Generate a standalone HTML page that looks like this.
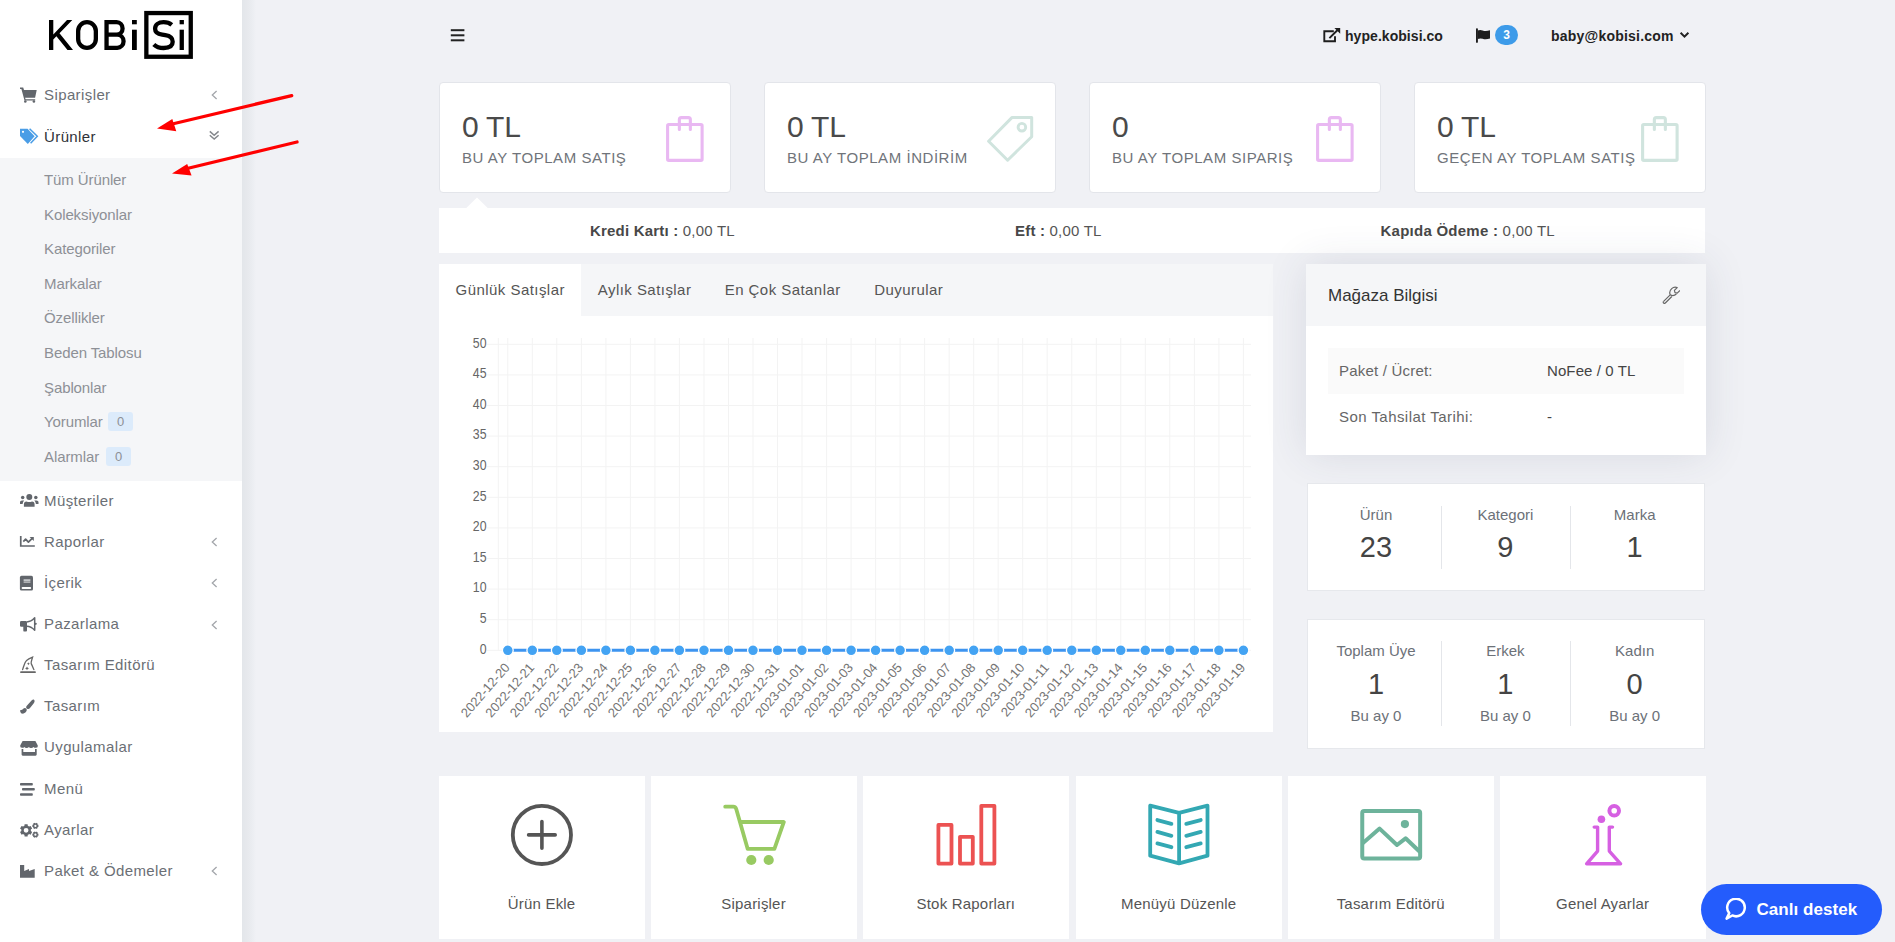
<!DOCTYPE html><html><head><meta charset="utf-8"><style>
*{margin:0;padding:0;box-sizing:border-box}
html,body{width:1895px;height:942px;overflow:hidden}
body{background:#f0f1f5;font-family:"Liberation Sans",sans-serif;color:#555;position:relative}
.a{position:absolute;white-space:nowrap}
#side{position:absolute;left:0;top:0;width:242px;height:942px;background:#fff}
#sideshadow{position:absolute;left:242px;top:0;width:14px;height:942px;background:linear-gradient(to right,#e3e6ea 0,#e7e9ed 6px,#eceef2 11px,#f0f1f5 14px)}
#sub{position:absolute;left:0;top:158px;width:242px;height:323px;background:#f5f6f8}
.mi{position:absolute;left:44px;font-size:15px;letter-spacing:0.4px;color:#6b6f75;white-space:nowrap;line-height:20px;height:20px}
.si{position:absolute;left:44px;font-size:15px;letter-spacing:-0.1px;color:#8d9096;white-space:nowrap;line-height:20px;height:20px}
.ic{position:absolute;left:14px;width:30px;height:24px}
.badge0{position:absolute;background:#dcebfb;color:#8d9096;border-radius:3px;font-size:13px;text-align:center;line-height:19px;height:19px;width:25px}
</style></head><body>
<div id="side"></div><div id="sideshadow"></div><div id="sub"></div>
<svg class="a" style="left:0;top:0" width="242" height="70" viewBox="0 0 242 70">
    <g fill="#000">
      <polygon points="49,20 53.3,20 53.3,34.5 67,20 72.3,20 59.5,33.3 73,50 67.5,50 56.4,36.2 53.3,39.4 53.3,50 49,50"/>
      <rect x="132" y="20" width="4.8" height="4.3"/>
      <rect x="132" y="29.7" width="4.8" height="20.3"/>
      <rect x="179.6" y="20" width="4.3" height="4.3"/>
      <rect x="179.6" y="29.7" width="4.3" height="20.3"/>
    </g>
    <g fill="none" stroke="#000" stroke-width="4.3">
      <rect x="78.15" y="22.15" width="17.7" height="25.7" rx="8.85" ry="8.85"/>
      <path d="M106.55,20 V50 M104.4,22.15 H116.55 a6.28,6.28 0 0 1 0,12.55 H106 M104.4,34.7 H117.25 a6.58,6.58 0 0 1 0,13.15 H104.4"/>
      <rect x="146.35" y="13.05" width="44.4" height="43.7"/>
      <path d="M171.8,24.8 C169.5,22.9 166.8,22.1 163.6,22.1 C158.6,22.1 155.1,24.6 155.1,28.7 C155.1,32.5 157.8,34 162.2,34.7 L165.3,35.2 C170.3,36 172.7,37.8 172.7,41.8 C172.7,45.8 169.3,48 163.7,48 C159.6,48 156.3,46.9 153.8,44.4"/>
    </g>
  </svg>
<div class="mi" style="top:84.8px;color:#6b6f75;font-weight:normal">Siparişler</div>
<svg class="a" style="left:208px;top:89px" width="12" height="12" viewBox="0 0 12 12"><path d="M8.6,2 L4.3,6 L8.6,10" fill="none" stroke="#a3a6ab" stroke-width="1.3"/></svg>
<div class="mi" style="top:127.0px;color:#2f3237;font-weight:normal">Ürünler</div>
<svg class="a" style="left:207px;top:128px" width="14" height="14" viewBox="0 0 14 14"><path d="M2.8,3.4 L7.2,7.3 L11.6,3.4 M2.8,7.2 L7.2,11.1 L11.6,7.2" fill="none" stroke="#85888d" stroke-width="1.5"/></svg>
<div class="si" style="top:170.0px">Tüm Ürünler</div>
<div class="si" style="top:204.6px">Koleksiyonlar</div>
<div class="si" style="top:239.2px">Kategoriler</div>
<div class="si" style="top:273.8px">Markalar</div>
<div class="si" style="top:308.4px">Özellikler</div>
<div class="si" style="top:343.0px">Beden Tablosu</div>
<div class="si" style="top:377.6px">Şablonlar</div>
<div class="si" style="top:412.2px">Yorumlar</div>
<div class="si" style="top:446.8px">Alarmlar</div>
<div class="badge0" style="left:108px;top:412px">0</div>
<div class="badge0" style="left:106px;top:447px">0</div>
<div class="mi" style="top:490.8px;color:#6b6f75;font-weight:normal">Müşteriler</div>
<div class="mi" style="top:531.9px;color:#6b6f75;font-weight:normal">Raporlar</div>
<svg class="a" style="left:208px;top:536.3000000000001px" width="12" height="12" viewBox="0 0 12 12"><path d="M8.6,2 L4.3,6 L8.6,10" fill="none" stroke="#a3a6ab" stroke-width="1.3"/></svg>
<div class="mi" style="top:573.0px;color:#6b6f75;font-weight:normal">İçerik</div>
<svg class="a" style="left:208px;top:577.4000000000001px" width="12" height="12" viewBox="0 0 12 12"><path d="M8.6,2 L4.3,6 L8.6,10" fill="none" stroke="#a3a6ab" stroke-width="1.3"/></svg>
<div class="mi" style="top:614.1px;color:#6b6f75;font-weight:normal">Pazarlama</div>
<svg class="a" style="left:208px;top:618.5px" width="12" height="12" viewBox="0 0 12 12"><path d="M8.6,2 L4.3,6 L8.6,10" fill="none" stroke="#a3a6ab" stroke-width="1.3"/></svg>
<div class="mi" style="top:655.2px;color:#6b6f75;font-weight:normal">Tasarım Editörü</div>
<div class="mi" style="top:696.3px;color:#6b6f75;font-weight:normal">Tasarım</div>
<div class="mi" style="top:737.4px;color:#6b6f75;font-weight:normal">Uygulamalar</div>
<div class="mi" style="top:778.5px;color:#6b6f75;font-weight:normal">Menü</div>
<div class="mi" style="top:819.6px;color:#6b6f75;font-weight:normal">Ayarlar</div>
<div class="mi" style="top:860.7px;color:#6b6f75;font-weight:normal">Paket &amp; Ödemeler</div>
<svg class="a" style="left:208px;top:865.1000000000001px" width="12" height="12" viewBox="0 0 12 12"><path d="M8.6,2 L4.3,6 L8.6,10" fill="none" stroke="#a3a6ab" stroke-width="1.3"/></svg>
<svg class="ic" style="top:80px" viewBox="14 80 30 24"><g fill="#62666c"><path d="M20,87.6 h3.2 l0.8,2.3 h12.7 l-1.6,7.9 h-10 l0.5,1.4 h9.6 v1.3 h-10.7 l-3.1,-11.4 h-1.4 z"/><circle cx="25.3" cy="101.5" r="1.3"/><circle cx="33.9" cy="101.5" r="1.3"/></g></svg>
<svg class="ic" style="top:120px" viewBox="14 120 30 24"><g fill="#4a9de6"><path d="M20,128.7 H27.6 L34.6,136.2 L27.8,143.9 L20,136 Z"/></g><circle cx="23" cy="131.8" r="1.1" fill="#fff"/><path d="M29.6,128.7 L37.3,136.2 L30.6,143.3" fill="none" stroke="#4a9de6" stroke-width="1.5"/></svg>
<svg class="ic" style="top:488px" viewBox="14 488 30 24"><g fill="#62666c"><circle cx="29.3" cy="496.9" r="3"/><circle cx="22.7" cy="497.4" r="1.75"/><circle cx="35.8" cy="497.4" r="1.75"/><path d="M23.9,506.8 V504.6 Q23.9,501.5 26.5,501.5 Q29.25,502.6 32,501.5 Q34.6,501.5 34.6,504.6 V506.8 Z"/><path d="M20,503.9 V502 Q20,500.4 22,500.4 H24.2 Q22.8,501.8 22.6,503.9 Z"/><path d="M38.5,503.9 V502 Q38.5,500.4 36.5,500.4 H34.3 Q35.7,501.8 35.9,503.9 Z"/></g></svg>
<svg class="ic" style="top:530px" viewBox="14 530 30 24"><g fill="#62666c"><path d="M19.9,536 H21.6 V545.3 H34.8 V546.8 H19.9 Z"/><polygon points="29.6,537 33.8,537 33.8,541"/></g><polyline points="23.3,541.6 25.6,539.2 28.4,542.2 32.2,538.3" fill="none" stroke="#62666c" stroke-width="1.7" stroke-linejoin="round"/></svg>
<svg class="ic" style="top:571px" viewBox="14 571 30 24"><rect x="19.9" y="575.8" width="13.1" height="14.8" rx="1.6" fill="#62666c"/><rect x="21.7" y="587" width="9.4" height="2" rx="0.8" fill="#fff"/><rect x="23.6" y="579.3" width="6.8" height="1.6" fill="#d0d2d5"/><rect x="23.6" y="581.3" width="6.8" height="1.6" fill="#b8babd"/></svg>
<svg class="ic" style="top:612px" viewBox="14 612 30 24"><g fill="#62666c"><rect x="20" y="621" width="7" height="5.8" rx="1.2"/><path d="M23.3,626 H27 V630.6 Q27,631.6 26,631.6 H24.6 Q23.3,631.6 23.3,630.4 Z"/><circle cx="35.7" cy="623.8" r="1.1"/></g><path d="M26.8,621.9 Q31,621.9 34.7,617.8 V630.2 Q31,626.2 26.8,626.2" fill="none" stroke="#62666c" stroke-width="1.5" stroke-linejoin="round"/></svg>
<svg class="ic" style="top:653px" viewBox="14 653 30 24"><path d="M22.6,669.6 C24,665.5 24.8,661.8 26.6,660.4 C28.6,658.8 30.7,658 32.6,657.2 C31.9,659.8 30.6,662.4 31.2,663.6 C32.4,666 33.2,668 33.9,669.6" fill="none" stroke="#666" stroke-width="1.3" stroke-linecap="round"/><rect x="20.2" y="671.2" width="15.6" height="1.9" rx="0.6" fill="#666"/><path d="M28.4,662.2 l0.5,1 1,0.5 -1,0.5 -0.5,1 -0.5,-1 -1,-0.5 1,-0.5z M27,666.4 l0.7,1.3 1.3,0.6 -1.3,0.6 -0.7,1.3 -0.7,-1.3 -1.3,-0.6 1.3,-0.6z" fill="#666"/></svg>
<svg class="ic" style="top:694px" viewBox="14 694 30 24"><g fill="#62666c"><path d="M34,699.7 C35.1,700.6 34.6,702 33.6,703.5 L29.8,708.3 C29.1,709.2 27.8,709.4 26.8,708.6 L26.6,708.4 C25.9,707.6 26,706.5 26.8,705.7 L31.8,700.3 C32.6,699.4 33.4,699.2 34,699.7 Z"/><path d="M20,710.2 C21.2,710.5 22.5,709.6 23.5,708.5 C24.3,707.8 25.4,707.8 26.2,708.6 C27,709.4 26.9,710.6 26.2,711.6 C25,713.3 23.2,714 21.8,713.6 C20.8,713.2 20.1,711.6 20,710.2 Z"/></g></svg>
<svg class="ic" style="top:735px" viewBox="14 735 30 24"><g fill="#62666c"><path d="M22.6,741 H35.4 L37.8,745.4 Q38.2,747.6 36,747.8 Q34.2,747.8 33.5,746.9 Q32.5,748 31,747.9 Q29.6,748 28.9,746.9 Q28,748 26.4,747.9 Q25,747.9 24.4,746.9 Q23.5,747.9 22,747.8 Q19.8,747.6 20.2,745.4 Z"/><path d="M21.6,749 H23.3 V752 H35 V749 H36.7 V754.6 Q36.7,755.7 35.6,755.7 H22.7 Q21.6,755.7 21.6,754.6 Z"/></g></svg>
<svg class="ic" style="top:776px" viewBox="14 776 30 24"><g fill="#62666c"><rect x="20" y="783" width="12.8" height="2.5" rx="0.8"/><rect x="22" y="788.1" width="12.8" height="2.5" rx="0.8"/><rect x="20" y="793.2" width="12.8" height="2.5" rx="0.8"/></g></svg>
<svg class="ic" style="top:817px" viewBox="14 817 30 24"><path fill-rule="evenodd" fill="#62666c" d="M24.41,825.81 L24.60,824.18 L27.60,824.18 L27.79,825.81 L28.15,825.96 L28.50,826.14 L28.83,826.35 L29.14,826.59 L30.65,825.94 L32.15,828.54 L30.84,829.52 L30.88,829.91 L30.90,830.30 L30.88,830.69 L30.84,831.08 L32.15,832.06 L30.65,834.66 L29.14,834.01 L28.83,834.25 L28.50,834.46 L28.15,834.64 L27.79,834.79 L27.60,836.42 L24.60,836.42 L24.41,834.79 L24.05,834.64 L23.70,834.46 L23.37,834.25 L23.06,834.01 L21.55,834.66 L20.05,832.06 L21.36,831.08 L21.32,830.69 L21.30,830.30 L21.32,829.91 L21.36,829.52 L20.05,828.54 L21.55,825.94 L23.06,826.59 L23.37,826.35 L23.70,826.14 L24.05,825.96 Z M28.5,830.3 A2.4,2.4 0 1 0 23.7,830.3 A2.4,2.4 0 1 0 28.5,830.3 Z M35.46,823.50 L36.02,822.76 L37.81,823.80 L37.45,824.65 L37.46,824.68 L37.48,824.70 L37.49,824.72 L37.51,824.75 L38.43,824.86 L38.43,826.94 L37.51,827.05 L37.49,827.08 L37.48,827.10 L37.46,827.12 L37.45,827.15 L37.81,828.00 L36.02,829.04 L35.46,828.30 L35.43,828.30 L35.40,828.30 L35.37,828.30 L35.34,828.30 L34.78,829.04 L32.99,828.00 L33.35,827.15 L33.34,827.12 L33.32,827.10 L33.31,827.08 L33.29,827.05 L32.37,826.94 L32.37,824.86 L33.29,824.75 L33.31,824.72 L33.32,824.70 L33.34,824.68 L33.35,824.65 L32.99,823.80 L34.78,822.76 L35.34,823.50 L35.37,823.50 L35.40,823.50 L35.43,823.50 Z M36.5,825.9 A1.1,1.1 0 1 0 34.3,825.9 A1.1,1.1 0 1 0 36.5,825.9 Z M35.46,832.30 L36.02,831.56 L37.81,832.60 L37.45,833.45 L37.46,833.48 L37.48,833.50 L37.49,833.52 L37.51,833.55 L38.43,833.66 L38.43,835.74 L37.51,835.85 L37.49,835.88 L37.48,835.90 L37.46,835.92 L37.45,835.95 L37.81,836.80 L36.02,837.84 L35.46,837.10 L35.43,837.10 L35.40,837.10 L35.37,837.10 L35.34,837.10 L34.78,837.84 L32.99,836.80 L33.35,835.95 L33.34,835.92 L33.32,835.90 L33.31,835.88 L33.29,835.85 L32.37,835.74 L32.37,833.66 L33.29,833.55 L33.31,833.52 L33.32,833.50 L33.34,833.48 L33.35,833.45 L32.99,832.60 L34.78,831.56 L35.34,832.30 L35.37,832.30 L35.40,832.30 L35.43,832.30 Z M36.5,834.7 A1.1,1.1 0 1 0 34.3,834.7 A1.1,1.1 0 1 0 36.5,834.7 Z"/></svg>
<svg class="ic" style="top:859px" viewBox="14 859 30 24"><path fill="#62666c" d="M20,865 H24.2 V871 L29,868.9 V871 L34.7,868.9 V877.7 H20 Z"/></svg>
<svg class="a" style="left:450px;top:28px" width="16" height="15" viewBox="0 0 16 15"><g fill="#222"><rect x="0.8" y="1.2" width="13.6" height="2"/><rect x="0.8" y="6.3" width="13.6" height="2"/><rect x="0.8" y="11.3" width="13.6" height="2"/></g></svg>
<svg class="a" style="left:1322px;top:27px" width="19" height="17" viewBox="0 0 19 17"><path d="M11.8,4.3 H2.3 V14.3 H13 V9.2" fill="none" stroke="#1e1e1e" stroke-width="1.9"/><path d="M7.4,11.2 L15.6,3" stroke="#1e1e1e" stroke-width="1.9"/><polygon points="12.4,1 18.2,1 18.2,6.8" fill="#1e1e1e"/></svg>
<div class="a" style="left:1345px;top:26px;font-size:14px;font-weight:bold;color:#222;line-height:20px;letter-spacing:0.05px">hype.kobisi.co</div>
<svg class="a" style="left:1474px;top:27px" width="18" height="17" viewBox="0 0 18 17"><rect x="2" y="1.3" width="1.9" height="14.6" rx="0.8" fill="#1e1e1e"/><path d="M3.6,3.5 Q6.2,2.4 8.6,3.4 Q11.6,4.6 16,3.3 V11.6 Q11.6,13 8.6,11.8 Q6.2,10.9 3.6,12 Z" fill="#1e1e1e"/></svg>
<div class="a" style="left:1495px;top:25px;width:23px;height:20px;border-radius:10px;background:#3d9be9;color:#fff;font-size:12px;font-weight:bold;text-align:center;line-height:21px">3</div>
<div class="a" style="left:1551px;top:26px;font-size:14px;font-weight:bold;color:#222;line-height:20px;letter-spacing:0.22px">baby@kobisi.com</div>
<svg class="a" style="left:1679px;top:30px" width="11" height="10" viewBox="0 0 11 10"><path d="M1.6,2.8 L5.5,6.6 L9.4,2.8" fill="none" stroke="#222" stroke-width="2"/></svg>
<div class="a" style="left:439px;top:82px;width:292px;height:111px;background:#fff;border:1px solid #e3e5ea;border-radius:4px"></div>
<div class="a" style="left:462px;top:108.7px;font-size:30px;color:#4a4a4a;line-height:36px;letter-spacing:-0.2px">0 TL</div>
<div class="a" style="left:462px;top:147.8px;font-size:15px;color:#70747a;line-height:20px;letter-spacing:0.55px">BU AY TOPLAM SATIŞ</div>
<svg class="a" style="left:665px;top:115px" width="40" height="48" viewBox="0 0 40 48"><rect x="2.6" y="9.45" width="34.5" height="35.9" rx="1.2" fill="none" stroke="#e9b8f2" stroke-width="3.1"/><path d="M14.35,14.5 V4.6 Q14.35,2.6 16.3,2.6 H23.4 Q25.35,2.6 25.35,4.6 V14.5" fill="none" stroke="#e9b8f2" stroke-width="3.1" stroke-linecap="round"/></svg>
<div class="a" style="left:764px;top:82px;width:292px;height:111px;background:#fff;border:1px solid #e3e5ea;border-radius:4px"></div>
<div class="a" style="left:787px;top:108.7px;font-size:30px;color:#4a4a4a;line-height:36px;letter-spacing:-0.2px">0 TL</div>
<div class="a" style="left:787px;top:147.8px;font-size:15px;color:#70747a;line-height:20px;letter-spacing:0.55px">BU AY TOPLAM İNDİRİM</div>
<svg class="a" style="left:985.5px;top:115px" width="48" height="48" viewBox="0 0 48 48"><path d="M26.1,2.4 H45.7 V21.7 L21.6,45.2 L2.6,26.2 Z" fill="none" stroke="#d0e4de" stroke-width="3" stroke-linejoin="round"/><circle cx="35.9" cy="12.2" r="3.8" fill="none" stroke="#d0e4de" stroke-width="2.9"/></svg>
<div class="a" style="left:1089px;top:82px;width:292px;height:111px;background:#fff;border:1px solid #e3e5ea;border-radius:4px"></div>
<div class="a" style="left:1112px;top:108.7px;font-size:30px;color:#4a4a4a;line-height:36px;letter-spacing:-0.2px">0</div>
<div class="a" style="left:1112px;top:147.8px;font-size:15px;color:#70747a;line-height:20px;letter-spacing:0.55px">BU AY TOPLAM SIPARIŞ</div>
<svg class="a" style="left:1315px;top:115px" width="40" height="48" viewBox="0 0 40 48"><rect x="2.6" y="9.45" width="34.5" height="35.9" rx="1.2" fill="none" stroke="#e9b8f2" stroke-width="3.1"/><path d="M14.35,14.5 V4.6 Q14.35,2.6 16.3,2.6 H23.4 Q25.35,2.6 25.35,4.6 V14.5" fill="none" stroke="#e9b8f2" stroke-width="3.1" stroke-linecap="round"/></svg>
<div class="a" style="left:1414px;top:82px;width:292px;height:111px;background:#fff;border:1px solid #e3e5ea;border-radius:4px"></div>
<div class="a" style="left:1437px;top:108.7px;font-size:30px;color:#4a4a4a;line-height:36px;letter-spacing:-0.2px">0 TL</div>
<div class="a" style="left:1437px;top:147.8px;font-size:15px;color:#70747a;line-height:20px;letter-spacing:0.55px">GEÇEN AY TOPLAM SATIŞ</div>
<svg class="a" style="left:1640px;top:115px" width="40" height="48" viewBox="0 0 40 48"><rect x="2.6" y="9.45" width="34.5" height="35.9" rx="1.2" fill="none" stroke="#d0e4de" stroke-width="3.1"/><path d="M14.35,14.5 V4.6 Q14.35,2.6 16.3,2.6 H23.4 Q25.35,2.6 25.35,4.6 V14.5" fill="none" stroke="#d0e4de" stroke-width="3.1" stroke-linecap="round"/></svg>
<svg class="a" style="left:465px;top:197px" width="24" height="12" viewBox="0 0 24 12"><polygon points="0.8,11.5 12,0.5 23.2,11.5" fill="#fff"/></svg>
<div class="a" style="left:439px;top:208px;width:1266px;height:45px;background:#fff"></div>
<div class="a" style="left:590px;top:220.5px;font-size:15px;color:#555;line-height:20px;letter-spacing:0.2px"><b style="color:#484848">Kredi Kartı :</b> 0,00 TL</div>
<div class="a" style="left:1015px;top:220.5px;font-size:15px;color:#555;line-height:20px;letter-spacing:0.2px"><b style="color:#484848">Eft :</b> 0,00 TL</div>
<div class="a" style="left:1380.5px;top:220.5px;font-size:15px;color:#555;line-height:20px;letter-spacing:0.25px"><b style="color:#484848">Kapıda Ödeme :</b> 0,00 TL</div>
<div class="a" style="left:439px;top:264px;width:834px;height:468px;background:#fff"></div>
<div class="a" style="left:581px;top:264px;width:692px;height:52px;background:#f5f6f8"></div>
<div class="a" style="left:455.6px;top:279.8px;font-size:15px;color:#555;line-height:20px;letter-spacing:0.45px">Günlük Satışlar</div>
<div class="a" style="left:597.8px;top:279.8px;font-size:15px;color:#555;line-height:20px;letter-spacing:0.45px">Aylık Satışlar</div>
<div class="a" style="left:724.7px;top:279.8px;font-size:15px;color:#555;line-height:20px;letter-spacing:0.45px">En Çok Satanlar</div>
<div class="a" style="left:874.2px;top:279.8px;font-size:15px;color:#555;line-height:20px;letter-spacing:0.45px">Duyurular</div>
<svg class="a" style="left:439px;top:316px" width="834" height="416" viewBox="439 316 834 416"><line x1="487" y1="650.3" x2="1251" y2="650.3" stroke="#f3f3f3" stroke-width="1"/><text transform="translate(486.5,653.6) scale(0.95,1.075)" text-anchor="end" font-size="13" fill="#666" font-family="Liberation Sans">0</text><line x1="487" y1="619.7" x2="1251" y2="619.7" stroke="#f3f3f3" stroke-width="1"/><text transform="translate(486.5,623.0) scale(0.95,1.075)" text-anchor="end" font-size="13" fill="#666" font-family="Liberation Sans">5</text><line x1="487" y1="589.1" x2="1251" y2="589.1" stroke="#f3f3f3" stroke-width="1"/><text transform="translate(486.5,592.4) scale(0.95,1.075)" text-anchor="end" font-size="13" fill="#666" font-family="Liberation Sans">10</text><line x1="487" y1="558.5" x2="1251" y2="558.5" stroke="#f3f3f3" stroke-width="1"/><text transform="translate(486.5,561.8) scale(0.95,1.075)" text-anchor="end" font-size="13" fill="#666" font-family="Liberation Sans">15</text><line x1="487" y1="527.9" x2="1251" y2="527.9" stroke="#f3f3f3" stroke-width="1"/><text transform="translate(486.5,531.2) scale(0.95,1.075)" text-anchor="end" font-size="13" fill="#666" font-family="Liberation Sans">20</text><line x1="487" y1="497.3" x2="1251" y2="497.3" stroke="#f3f3f3" stroke-width="1"/><text transform="translate(486.5,500.6) scale(0.95,1.075)" text-anchor="end" font-size="13" fill="#666" font-family="Liberation Sans">25</text><line x1="487" y1="466.7" x2="1251" y2="466.7" stroke="#f3f3f3" stroke-width="1"/><text transform="translate(486.5,470.0) scale(0.95,1.075)" text-anchor="end" font-size="13" fill="#666" font-family="Liberation Sans">30</text><line x1="487" y1="436.1" x2="1251" y2="436.1" stroke="#f3f3f3" stroke-width="1"/><text transform="translate(486.5,439.4) scale(0.95,1.075)" text-anchor="end" font-size="13" fill="#666" font-family="Liberation Sans">35</text><line x1="487" y1="405.5" x2="1251" y2="405.5" stroke="#f3f3f3" stroke-width="1"/><text transform="translate(486.5,408.8) scale(0.95,1.075)" text-anchor="end" font-size="13" fill="#666" font-family="Liberation Sans">40</text><line x1="487" y1="374.9" x2="1251" y2="374.9" stroke="#f3f3f3" stroke-width="1"/><text transform="translate(486.5,378.2) scale(0.95,1.075)" text-anchor="end" font-size="13" fill="#666" font-family="Liberation Sans">45</text><line x1="487" y1="344.3" x2="1251" y2="344.3" stroke="#f3f3f3" stroke-width="1"/><text transform="translate(486.5,347.6) scale(0.95,1.075)" text-anchor="end" font-size="13" fill="#666" font-family="Liberation Sans">50</text><line x1="498.3" y1="338" x2="498.3" y2="650.3" stroke="#f3f3f3" stroke-width="1"/><line x1="507.8" y1="338" x2="507.8" y2="661.5" stroke="#f3f3f3" stroke-width="1"/><line x1="532.3" y1="338" x2="532.3" y2="661.5" stroke="#f3f3f3" stroke-width="1"/><line x1="556.8" y1="338" x2="556.8" y2="661.5" stroke="#f3f3f3" stroke-width="1"/><line x1="581.4" y1="338" x2="581.4" y2="661.5" stroke="#f3f3f3" stroke-width="1"/><line x1="605.9" y1="338" x2="605.9" y2="661.5" stroke="#f3f3f3" stroke-width="1"/><line x1="630.4" y1="338" x2="630.4" y2="661.5" stroke="#f3f3f3" stroke-width="1"/><line x1="654.9" y1="338" x2="654.9" y2="661.5" stroke="#f3f3f3" stroke-width="1"/><line x1="679.4" y1="338" x2="679.4" y2="661.5" stroke="#f3f3f3" stroke-width="1"/><line x1="704.0" y1="338" x2="704.0" y2="661.5" stroke="#f3f3f3" stroke-width="1"/><line x1="728.5" y1="338" x2="728.5" y2="661.5" stroke="#f3f3f3" stroke-width="1"/><line x1="753.0" y1="338" x2="753.0" y2="661.5" stroke="#f3f3f3" stroke-width="1"/><line x1="777.5" y1="338" x2="777.5" y2="661.5" stroke="#f3f3f3" stroke-width="1"/><line x1="802.0" y1="338" x2="802.0" y2="661.5" stroke="#f3f3f3" stroke-width="1"/><line x1="826.6" y1="338" x2="826.6" y2="661.5" stroke="#f3f3f3" stroke-width="1"/><line x1="851.1" y1="338" x2="851.1" y2="661.5" stroke="#f3f3f3" stroke-width="1"/><line x1="875.6" y1="338" x2="875.6" y2="661.5" stroke="#f3f3f3" stroke-width="1"/><line x1="900.1" y1="338" x2="900.1" y2="661.5" stroke="#f3f3f3" stroke-width="1"/><line x1="924.6" y1="338" x2="924.6" y2="661.5" stroke="#f3f3f3" stroke-width="1"/><line x1="949.2" y1="338" x2="949.2" y2="661.5" stroke="#f3f3f3" stroke-width="1"/><line x1="973.7" y1="338" x2="973.7" y2="661.5" stroke="#f3f3f3" stroke-width="1"/><line x1="998.2" y1="338" x2="998.2" y2="661.5" stroke="#f3f3f3" stroke-width="1"/><line x1="1022.7" y1="338" x2="1022.7" y2="661.5" stroke="#f3f3f3" stroke-width="1"/><line x1="1047.2" y1="338" x2="1047.2" y2="661.5" stroke="#f3f3f3" stroke-width="1"/><line x1="1071.8" y1="338" x2="1071.8" y2="661.5" stroke="#f3f3f3" stroke-width="1"/><line x1="1096.3" y1="338" x2="1096.3" y2="661.5" stroke="#f3f3f3" stroke-width="1"/><line x1="1120.8" y1="338" x2="1120.8" y2="661.5" stroke="#f3f3f3" stroke-width="1"/><line x1="1145.3" y1="338" x2="1145.3" y2="661.5" stroke="#f3f3f3" stroke-width="1"/><line x1="1169.8" y1="338" x2="1169.8" y2="661.5" stroke="#f3f3f3" stroke-width="1"/><line x1="1194.4" y1="338" x2="1194.4" y2="661.5" stroke="#f3f3f3" stroke-width="1"/><line x1="1218.9" y1="338" x2="1218.9" y2="661.5" stroke="#f3f3f3" stroke-width="1"/><line x1="1243.4" y1="338" x2="1243.4" y2="661.5" stroke="#f3f3f3" stroke-width="1"/><text text-anchor="end" font-size="13" fill="#757575" font-family="Liberation Sans" transform="translate(507.0,665) rotate(-49)" dominant-baseline="central">2022-12-20</text><text text-anchor="end" font-size="13" fill="#757575" font-family="Liberation Sans" transform="translate(531.5,665) rotate(-49)" dominant-baseline="central">2022-12-21</text><text text-anchor="end" font-size="13" fill="#757575" font-family="Liberation Sans" transform="translate(556.0,665) rotate(-49)" dominant-baseline="central">2022-12-22</text><text text-anchor="end" font-size="13" fill="#757575" font-family="Liberation Sans" transform="translate(580.6,665) rotate(-49)" dominant-baseline="central">2022-12-23</text><text text-anchor="end" font-size="13" fill="#757575" font-family="Liberation Sans" transform="translate(605.1,665) rotate(-49)" dominant-baseline="central">2022-12-24</text><text text-anchor="end" font-size="13" fill="#757575" font-family="Liberation Sans" transform="translate(629.6,665) rotate(-49)" dominant-baseline="central">2022-12-25</text><text text-anchor="end" font-size="13" fill="#757575" font-family="Liberation Sans" transform="translate(654.1,665) rotate(-49)" dominant-baseline="central">2022-12-26</text><text text-anchor="end" font-size="13" fill="#757575" font-family="Liberation Sans" transform="translate(678.6,665) rotate(-49)" dominant-baseline="central">2022-12-27</text><text text-anchor="end" font-size="13" fill="#757575" font-family="Liberation Sans" transform="translate(703.2,665) rotate(-49)" dominant-baseline="central">2022-12-28</text><text text-anchor="end" font-size="13" fill="#757575" font-family="Liberation Sans" transform="translate(727.7,665) rotate(-49)" dominant-baseline="central">2022-12-29</text><text text-anchor="end" font-size="13" fill="#757575" font-family="Liberation Sans" transform="translate(752.2,665) rotate(-49)" dominant-baseline="central">2022-12-30</text><text text-anchor="end" font-size="13" fill="#757575" font-family="Liberation Sans" transform="translate(776.7,665) rotate(-49)" dominant-baseline="central">2022-12-31</text><text text-anchor="end" font-size="13" fill="#757575" font-family="Liberation Sans" transform="translate(801.2,665) rotate(-49)" dominant-baseline="central">2023-01-01</text><text text-anchor="end" font-size="13" fill="#757575" font-family="Liberation Sans" transform="translate(825.8,665) rotate(-49)" dominant-baseline="central">2023-01-02</text><text text-anchor="end" font-size="13" fill="#757575" font-family="Liberation Sans" transform="translate(850.3,665) rotate(-49)" dominant-baseline="central">2023-01-03</text><text text-anchor="end" font-size="13" fill="#757575" font-family="Liberation Sans" transform="translate(874.8,665) rotate(-49)" dominant-baseline="central">2023-01-04</text><text text-anchor="end" font-size="13" fill="#757575" font-family="Liberation Sans" transform="translate(899.3,665) rotate(-49)" dominant-baseline="central">2023-01-05</text><text text-anchor="end" font-size="13" fill="#757575" font-family="Liberation Sans" transform="translate(923.8,665) rotate(-49)" dominant-baseline="central">2023-01-06</text><text text-anchor="end" font-size="13" fill="#757575" font-family="Liberation Sans" transform="translate(948.4,665) rotate(-49)" dominant-baseline="central">2023-01-07</text><text text-anchor="end" font-size="13" fill="#757575" font-family="Liberation Sans" transform="translate(972.9,665) rotate(-49)" dominant-baseline="central">2023-01-08</text><text text-anchor="end" font-size="13" fill="#757575" font-family="Liberation Sans" transform="translate(997.4,665) rotate(-49)" dominant-baseline="central">2023-01-09</text><text text-anchor="end" font-size="13" fill="#757575" font-family="Liberation Sans" transform="translate(1021.9,665) rotate(-49)" dominant-baseline="central">2023-01-10</text><text text-anchor="end" font-size="13" fill="#757575" font-family="Liberation Sans" transform="translate(1046.4,665) rotate(-49)" dominant-baseline="central">2023-01-11</text><text text-anchor="end" font-size="13" fill="#757575" font-family="Liberation Sans" transform="translate(1071.0,665) rotate(-49)" dominant-baseline="central">2023-01-12</text><text text-anchor="end" font-size="13" fill="#757575" font-family="Liberation Sans" transform="translate(1095.5,665) rotate(-49)" dominant-baseline="central">2023-01-13</text><text text-anchor="end" font-size="13" fill="#757575" font-family="Liberation Sans" transform="translate(1120.0,665) rotate(-49)" dominant-baseline="central">2023-01-14</text><text text-anchor="end" font-size="13" fill="#757575" font-family="Liberation Sans" transform="translate(1144.5,665) rotate(-49)" dominant-baseline="central">2023-01-15</text><text text-anchor="end" font-size="13" fill="#757575" font-family="Liberation Sans" transform="translate(1169.0,665) rotate(-49)" dominant-baseline="central">2023-01-16</text><text text-anchor="end" font-size="13" fill="#757575" font-family="Liberation Sans" transform="translate(1193.6,665) rotate(-49)" dominant-baseline="central">2023-01-17</text><text text-anchor="end" font-size="13" fill="#757575" font-family="Liberation Sans" transform="translate(1218.1,665) rotate(-49)" dominant-baseline="central">2023-01-18</text><text text-anchor="end" font-size="13" fill="#757575" font-family="Liberation Sans" transform="translate(1242.6,665) rotate(-49)" dominant-baseline="central">2023-01-19</text><line x1="507.8" y1="650.3" x2="1243.4" y2="650.3" stroke="#3d94f0" stroke-width="2.9"/><circle cx="507.8" cy="650.3" r="5.4" fill="#43a3f3" stroke="#fff" stroke-width="1.3"/><circle cx="532.3" cy="650.3" r="5.4" fill="#43a3f3" stroke="#fff" stroke-width="1.3"/><circle cx="556.8" cy="650.3" r="5.4" fill="#43a3f3" stroke="#fff" stroke-width="1.3"/><circle cx="581.4" cy="650.3" r="5.4" fill="#43a3f3" stroke="#fff" stroke-width="1.3"/><circle cx="605.9" cy="650.3" r="5.4" fill="#43a3f3" stroke="#fff" stroke-width="1.3"/><circle cx="630.4" cy="650.3" r="5.4" fill="#43a3f3" stroke="#fff" stroke-width="1.3"/><circle cx="654.9" cy="650.3" r="5.4" fill="#43a3f3" stroke="#fff" stroke-width="1.3"/><circle cx="679.4" cy="650.3" r="5.4" fill="#43a3f3" stroke="#fff" stroke-width="1.3"/><circle cx="704.0" cy="650.3" r="5.4" fill="#43a3f3" stroke="#fff" stroke-width="1.3"/><circle cx="728.5" cy="650.3" r="5.4" fill="#43a3f3" stroke="#fff" stroke-width="1.3"/><circle cx="753.0" cy="650.3" r="5.4" fill="#43a3f3" stroke="#fff" stroke-width="1.3"/><circle cx="777.5" cy="650.3" r="5.4" fill="#43a3f3" stroke="#fff" stroke-width="1.3"/><circle cx="802.0" cy="650.3" r="5.4" fill="#43a3f3" stroke="#fff" stroke-width="1.3"/><circle cx="826.6" cy="650.3" r="5.4" fill="#43a3f3" stroke="#fff" stroke-width="1.3"/><circle cx="851.1" cy="650.3" r="5.4" fill="#43a3f3" stroke="#fff" stroke-width="1.3"/><circle cx="875.6" cy="650.3" r="5.4" fill="#43a3f3" stroke="#fff" stroke-width="1.3"/><circle cx="900.1" cy="650.3" r="5.4" fill="#43a3f3" stroke="#fff" stroke-width="1.3"/><circle cx="924.6" cy="650.3" r="5.4" fill="#43a3f3" stroke="#fff" stroke-width="1.3"/><circle cx="949.2" cy="650.3" r="5.4" fill="#43a3f3" stroke="#fff" stroke-width="1.3"/><circle cx="973.7" cy="650.3" r="5.4" fill="#43a3f3" stroke="#fff" stroke-width="1.3"/><circle cx="998.2" cy="650.3" r="5.4" fill="#43a3f3" stroke="#fff" stroke-width="1.3"/><circle cx="1022.7" cy="650.3" r="5.4" fill="#43a3f3" stroke="#fff" stroke-width="1.3"/><circle cx="1047.2" cy="650.3" r="5.4" fill="#43a3f3" stroke="#fff" stroke-width="1.3"/><circle cx="1071.8" cy="650.3" r="5.4" fill="#43a3f3" stroke="#fff" stroke-width="1.3"/><circle cx="1096.3" cy="650.3" r="5.4" fill="#43a3f3" stroke="#fff" stroke-width="1.3"/><circle cx="1120.8" cy="650.3" r="5.4" fill="#43a3f3" stroke="#fff" stroke-width="1.3"/><circle cx="1145.3" cy="650.3" r="5.4" fill="#43a3f3" stroke="#fff" stroke-width="1.3"/><circle cx="1169.8" cy="650.3" r="5.4" fill="#43a3f3" stroke="#fff" stroke-width="1.3"/><circle cx="1194.4" cy="650.3" r="5.4" fill="#43a3f3" stroke="#fff" stroke-width="1.3"/><circle cx="1218.9" cy="650.3" r="5.4" fill="#43a3f3" stroke="#fff" stroke-width="1.3"/><circle cx="1243.4" cy="650.3" r="5.4" fill="#43a3f3" stroke="#fff" stroke-width="1.3"/></svg>
<div class="a" style="left:1306px;top:264px;width:400px;height:191px;background:#fff;box-shadow:0 0 40px rgba(50,60,90,0.12)"></div>
<div class="a" style="left:1306px;top:264px;width:400px;height:62px;background:#f5f6f8"></div>
<div class="a" style="left:1328px;top:283.5px;font-size:17px;color:#333;line-height:24px">Mağaza Bilgisi</div>
<svg class="a" style="left:1661px;top:285px" width="19" height="19" viewBox="0 0 19 19"><path d="M2.6,16.4 L9.2,9.8 C8.3,7.6 8.9,5.2 10.7,3.6 C12.3,2.2 14.4,1.9 16.2,2.6 L13.4,5.4 L14,7.6 L16.2,8.2 L19,5.4" fill="none" stroke="#666" stroke-width="1.2" stroke-linejoin="round"/><path d="M9.3,9.8 C11.2,10.9 13.6,10.6 15.4,9 M2.6,16.4 C2.1,16.9 2.1,17.6 2.6,18 C3.1,18.5 3.8,18.5 4.3,18 L10.8,11.5" fill="none" stroke="#666" stroke-width="1.2"/></svg>
<div class="a" style="left:1328px;top:348px;width:356px;height:46px;background:#fafafa"></div>
<div class="a" style="left:1339px;top:360.5px;font-size:15px;color:#666;line-height:20px;letter-spacing:0.2px">Paket / Ücret:</div>
<div class="a" style="left:1547px;top:360.5px;font-size:15px;color:#444;line-height:20px;letter-spacing:0.1px">NoFee / 0 TL</div>
<div class="a" style="left:1339px;top:406.5px;font-size:15px;color:#666;line-height:20px;letter-spacing:0.45px">Son Tahsilat Tarihi:</div>
<div class="a" style="left:1547px;top:406.5px;font-size:15px;color:#444;line-height:20px">-</div>
<div class="a" style="left:1307px;top:483px;width:398px;height:108px;background:#fff;border:1px solid #e6e8ec"></div>
<div class="a" style="left:1440.5px;top:505.5px;width:1px;height:63px;background:#e4e6ea"></div>
<div class="a" style="left:1569.5px;top:505.5px;width:1px;height:63px;background:#e4e6ea"></div>
<div class="a" style="left:1316px;width:120px;text-align:center;top:504.7px;font-size:15px;color:#6c7178;line-height:20px">Ürün</div>
<div class="a" style="left:1316px;width:120px;text-align:center;top:529.3px;font-size:29px;color:#444;line-height:36px">23</div>
<div class="a" style="left:1445.4px;width:120px;text-align:center;top:504.7px;font-size:15px;color:#6c7178;line-height:20px">Kategori</div>
<div class="a" style="left:1445.4px;width:120px;text-align:center;top:529.3px;font-size:29px;color:#444;line-height:36px">9</div>
<div class="a" style="left:1574.7px;width:120px;text-align:center;top:504.7px;font-size:15px;color:#6c7178;line-height:20px">Marka</div>
<div class="a" style="left:1574.7px;width:120px;text-align:center;top:529.3px;font-size:29px;color:#444;line-height:36px">1</div>
<div class="a" style="left:1307px;top:619px;width:398px;height:130px;background:#fff;border:1px solid #e6e8ec"></div>
<div class="a" style="left:1440.5px;top:641px;width:1px;height:85px;background:#e4e6ea"></div>
<div class="a" style="left:1569.5px;top:641px;width:1px;height:85px;background:#e4e6ea"></div>
<div class="a" style="left:1316px;width:120px;text-align:center;top:641.1px;font-size:15px;color:#6c7178;line-height:20px">Toplam Üye</div>
<div class="a" style="left:1316px;width:120px;text-align:center;top:666.4px;font-size:29px;color:#444;line-height:36px">1</div>
<div class="a" style="left:1316px;width:120px;text-align:center;top:705.7px;font-size:15px;color:#6c7178;line-height:20px">Bu ay 0</div>
<div class="a" style="left:1445.4px;width:120px;text-align:center;top:641.1px;font-size:15px;color:#6c7178;line-height:20px">Erkek</div>
<div class="a" style="left:1445.4px;width:120px;text-align:center;top:666.4px;font-size:29px;color:#444;line-height:36px">1</div>
<div class="a" style="left:1445.4px;width:120px;text-align:center;top:705.7px;font-size:15px;color:#6c7178;line-height:20px">Bu ay 0</div>
<div class="a" style="left:1574.7px;width:120px;text-align:center;top:641.1px;font-size:15px;color:#6c7178;line-height:20px">Kadın</div>
<div class="a" style="left:1574.7px;width:120px;text-align:center;top:666.4px;font-size:29px;color:#444;line-height:36px">0</div>
<div class="a" style="left:1574.7px;width:120px;text-align:center;top:705.7px;font-size:15px;color:#6c7178;line-height:20px">Bu ay 0</div>
<div class="a" style="left:438.6px;top:776px;width:206px;height:163px;background:#fff"></div>
<div class="a" style="left:438.6px;width:206px;text-align:center;top:894.0px;font-size:15px;color:#555;line-height:20px;letter-spacing:0.2px">Ürün Ekle</div>
<div class="a" style="left:650.6px;top:776px;width:206px;height:163px;background:#fff"></div>
<div class="a" style="left:650.6px;width:206px;text-align:center;top:894.0px;font-size:15px;color:#555;line-height:20px;letter-spacing:0.2px">Siparişler</div>
<div class="a" style="left:862.9px;top:776px;width:206px;height:163px;background:#fff"></div>
<div class="a" style="left:862.9px;width:206px;text-align:center;top:894.0px;font-size:15px;color:#555;line-height:20px;letter-spacing:0.2px">Stok Raporları</div>
<div class="a" style="left:1075.7px;top:776px;width:206px;height:163px;background:#fff"></div>
<div class="a" style="left:1075.7px;width:206px;text-align:center;top:894.0px;font-size:15px;color:#555;line-height:20px;letter-spacing:0.2px">Menüyü Düzenle</div>
<div class="a" style="left:1287.7px;top:776px;width:206px;height:163px;background:#fff"></div>
<div class="a" style="left:1287.7px;width:206px;text-align:center;top:894.0px;font-size:15px;color:#555;line-height:20px;letter-spacing:0.2px">Tasarım Editörü</div>
<div class="a" style="left:1499.7px;top:776px;width:206px;height:163px;background:#fff"></div>
<div class="a" style="left:1499.7px;width:206px;text-align:center;top:894.0px;font-size:15px;color:#555;line-height:20px;letter-spacing:0.2px">Genel Ayarlar</div>
<svg class="a" style="left:509px;top:802px" width="66" height="66" viewBox="0 0 66 66"><circle cx="32.9" cy="32.9" r="29.1" fill="none" stroke="#555" stroke-width="3.8"/><path d="M32.9,19.6 V46.2 M19.6,32.9 H46.2" stroke="#555" stroke-width="3.6" stroke-linecap="round"/></svg>
<svg class="a" style="left:721px;top:802px" width="66" height="66" viewBox="0 0 66 66"><path d="M4.2,4.7 H12.3 Q14.6,4.7 15.3,7.2 L26.7,46.9 H53.4 L62.8,20 H20.3" fill="none" stroke="#98ca62" stroke-width="3.8" stroke-linejoin="round" stroke-linecap="round"/><circle cx="30.3" cy="58" r="5.1" fill="#98ca62"/><circle cx="47.7" cy="58" r="5.1" fill="#98ca62"/></svg>
<svg class="a" style="left:934px;top:802px" width="66" height="66" viewBox="0 0 66 66"><g fill="none" stroke="#ec5252" stroke-width="3.8" stroke-linejoin="round"><rect x="4.4" y="22.9" width="13.1" height="38.7"/><rect x="26" y="34.8" width="12.8" height="26.8"/><rect x="47.3" y="3.8" width="13.1" height="57.8"/></g></svg>
<svg class="a" style="left:1145px;top:801px" width="68" height="68" viewBox="0 0 68 68"><g fill="none" stroke="#33a8b3" stroke-width="3.8" stroke-linejoin="round" stroke-linecap="round"><path d="M34.1,11.8 L5.2,4.6 V54.7 L34.1,62.4 L62.5,54.7 V4.6 Z M34.1,11.8 V62.4"/><path d="M12.4,19.05 L26.4,22.9 M12.4,30.9 L26.4,34.8 M12.4,42.4 L26.4,46.2 M55.7,19.05 L41.3,22.9 M55.7,30.9 L41.3,34.8 M55.7,42.4 L41.3,46.2"/></g></svg>
<svg class="a" style="left:1358px;top:806px" width="68" height="58" viewBox="0 0 68 58"><g fill="none" stroke="#6db39b" stroke-width="4" stroke-linejoin="round"><rect x="4.25" y="4.95" width="57.9" height="47.5" rx="2"/><path d="M4.4,37.5 L21.6,22.6 L39,39 L47.6,32.3 L62,46"/></g><circle cx="46.9" cy="18.1" r="4.1" fill="#6db39b"/></svg>
<svg class="a" style="left:1582px;top:801px" width="44" height="68" viewBox="0 0 44 68"><g fill="none" stroke="#d660e2" stroke-width="3.4" stroke-linejoin="round" stroke-linecap="round"><circle cx="32.2" cy="9.7" r="4.8" stroke-width="4"/><path d="M12.2,26.1 H15.6 V50.1 L4.6,62.8 H38.6 L27.3,50.1 V26.1 H30.5"/></g><circle cx="19.4" cy="18.2" r="3.8" fill="#d660e2"/></svg>
<div class="a" style="left:1701px;top:884px;width:181px;height:51px;border-radius:26px;background:#245cfc"></div>
<svg class="a" style="left:1723px;top:898px" width="26" height="24" viewBox="0 0 26 24"><path d="M6.26,15.16 A8.8,8.8 0 1 1 9.28,17.48 L3.6,20.6 Z" fill="none" stroke="#fff" stroke-width="2.5" stroke-linejoin="round"/></svg>
<div class="a" style="left:1756.5px;top:897.5px;font-size:17px;font-weight:bold;color:#fff;line-height:24px;letter-spacing:0.05px">Canlı destek</div>
<svg class="a" style="left:0;top:0" width="320" height="200" viewBox="0 0 320 200"><g stroke="#ff0000" stroke-width="3.3" stroke-linecap="round"><line x1="291.7" y1="95.6" x2="168" y2="125"/><line x1="297" y1="142" x2="183" y2="169.5"/></g><g fill="#ff0000"><polygon points="157,128.4 172.3,119 176.3,131.2"/><polygon points="172,173.6 187.2,164 191.6,175.4"/></g></svg>
</body></html>
